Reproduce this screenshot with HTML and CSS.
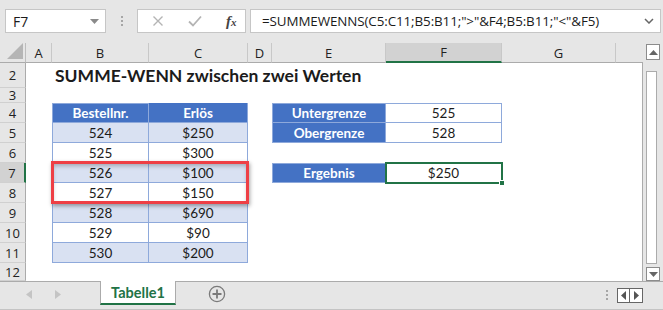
FILE: index.html
```html
<!DOCTYPE html>
<html lang="de">
<head>
<meta charset="utf-8">
<title>SUMME-WENN zwischen zwei Werten</title>
<link rel="stylesheet" href="styles.css">
</head>
<body>
<div class="app">
  <div class="fbar">
    <div class="namebox"><span>F7</span><svg class="dd" width="9" height="5" viewBox="0 0 9 5"><path d="M0 0H9L4.5 5Z" fill="#8a8a8a"/></svg></div>
    <div class="grip"><i></i><i></i><i></i></div>
    <div class="fnbox">
      <svg width="12" height="12" viewBox="0 0 12 12"><path d="M1.5 1.5L10.5 10.5M10.5 1.5L1.5 10.5" stroke="#b4b4b4" stroke-width="1.4"/></svg>
      <svg width="14" height="12" viewBox="0 0 14 12"><path d="M1 6.5L5 10.5L13 1.5" stroke="#b4b4b4" stroke-width="1.8" fill="none"/></svg>
      <span class="fx">f<sub>x</sub></span>
    </div>
    <div class="formula"><span>=SUMMEWENNS(C5:C11;B5:B11;"&gt;"&amp;F4;B5:B11;"&lt;"&amp;F5)</span><svg width="10" height="6" viewBox="0 0 10 6"><path d="M1 1L5 5L9 1" stroke="#666" stroke-width="1.5" fill="none"/></svg></div>
  </div>

  <div class="sheetwrap">
    <div class="sheet">
      <div class="corner"><svg width="16" height="16" viewBox="0 0 16 16"><path d="M16 0V16H0Z" fill="#b5b5b5"/></svg></div>
      <div class="ch">A</div><div class="ch">B</div><div class="ch">C</div><div class="ch">D</div><div class="ch">E</div><div class="ch sel">F</div><div class="ch">G</div><div class="ch last"></div>

      <div class="rh">2</div><div class="c"></div><div class="c title">SUMME-WENN zwischen zwei Werten</div><div class="c"></div><div class="c"></div><div class="c"></div><div class="c"></div><div class="c"></div><div class="c"></div>

      <div class="rh">3</div><div class="c"></div><div class="c"></div><div class="c"></div><div class="c"></div><div class="c"></div><div class="c"></div><div class="c"></div><div class="c"></div>

      <div class="rh">4</div><div class="c"></div><div class="c th tl">Bestellnr.</div><div class="c th">Erlös</div><div class="c"></div><div class="c th tl">Untergrenze</div><div class="c tv">525</div><div class="c"></div><div class="c"></div>

      <div class="rh">5</div><div class="c"></div><div class="c td fc odd">524</div><div class="c td odd">$250</div><div class="c"></div><div class="c th fc2">Obergrenze</div><div class="c tv2">528</div><div class="c"></div><div class="c"></div>

      <div class="rh">6</div><div class="c"></div><div class="c td fc">525</div><div class="c td">$300</div><div class="c"></div><div class="c"></div><div class="c"></div><div class="c"></div><div class="c"></div>

      <div class="rh sel">7</div><div class="c"></div><div class="c td fc odd">526</div><div class="c td odd">$100</div><div class="c"></div><div class="c th tl">Ergebnis</div><div class="c tv">$250</div><div class="c"></div><div class="c"></div>

      <div class="rh">8</div><div class="c"></div><div class="c td fc">527</div><div class="c td">$150</div><div class="c"></div><div class="c"></div><div class="c"></div><div class="c"></div><div class="c"></div>

      <div class="rh">9</div><div class="c"></div><div class="c td fc odd">528</div><div class="c td odd">$690</div><div class="c"></div><div class="c"></div><div class="c"></div><div class="c"></div><div class="c"></div>

      <div class="rh">10</div><div class="c"></div><div class="c td fc">529</div><div class="c td">$90</div><div class="c"></div><div class="c"></div><div class="c"></div><div class="c"></div><div class="c"></div>

      <div class="rh">11</div><div class="c"></div><div class="c td fc odd">530</div><div class="c td odd">$200</div><div class="c"></div><div class="c"></div><div class="c"></div><div class="c"></div><div class="c"></div>

      <div class="rh">12</div><div class="c"></div><div class="c"></div><div class="c"></div><div class="c"></div><div class="c"></div><div class="c"></div><div class="c"></div><div class="c"></div>

      <div class="redbox"></div>
      <div class="selbox"><i></i></div>
    </div>
    <div class="vscroll">
      <div class="sbtn"><svg width="9" height="5" viewBox="0 0 9 5"><path d="M0 5H9L4.5 0Z" fill="#666"/></svg></div>
      <div class="thumb"></div>
      <div class="sbtn"><svg width="9" height="5" viewBox="0 0 9 5"><path d="M0 0H9L4.5 5Z" fill="#666"/></svg></div>
    </div>
  </div>

  <div class="tabbar">
    <div class="navs">
      <svg width="6" height="9" viewBox="0 0 6 9"><path d="M6 0V9L0 4.5Z" fill="#c4c4c4"/></svg>
      <svg width="6" height="9" viewBox="0 0 6 9"><path d="M0 0V9L6 4.5Z" fill="#c4c4c4"/></svg>
    </div>
    <div class="tab">Tabelle1</div>
    <div class="add"><svg width="18" height="18" viewBox="0 0 18 18"><circle cx="9" cy="9" r="7.6" fill="none" stroke="#7a7a7a" stroke-width="1.3"/><path d="M9 4.5V13.5M4.5 9H13.5" stroke="#7a7a7a" stroke-width="1.8"/></svg></div>
    <div class="spacer"></div>
    <div class="grip2"><i></i><i></i><i></i></div>
    <div class="hnav">
      <div class="hb"><svg width="5" height="9" viewBox="0 0 5 9"><path d="M5 0V9L0 4.5Z" fill="#555"/></svg></div>
      <div class="hb"><svg width="5" height="9" viewBox="0 0 5 9"><path d="M0 0V9L5 4.5Z" fill="#555"/></svg></div>
    </div>
  </div>
</div>
</body>
</html>
```

FILE: styles.css
```css
* { box-sizing: border-box; }
html, body { margin: 0; padding: 0; }
body { background: #e6e6e6; font-family: "Open Sans", "Noto Sans", sans-serif; color: #1b1b1b; }
.app { width: 663px; height: 310px; overflow: hidden; background: #e6e6e6; }

.fbar { height: 43px; display: flex; align-items: flex-start; padding-top: 9px; padding-left: 5px; }
.namebox { width: 101px; height: 24px; background: #fff; border: 1px solid #c6c6c6; display: flex; align-items: center; justify-content: space-between; padding: 0 6px 0 7px; font-size: 14px; }
.grip { width: 31px; height: 24px; display: flex; flex-direction: column; align-items: center; justify-content: center; gap: 2px; }
.grip i, .grip2 i { display: block; width: 2px; height: 2px; background: #a6a6a6; }
.fnbox { width: 109px; height: 24px; background: #fff; border: 1px solid #c6c6c6; display: flex; align-items: center; padding: 0 0 0 14px; gap: 0; }
.fnbox svg:first-child { margin-right: 24px; }
.fnbox svg:nth-child(2) { margin-right: 24px; }
.fx { font-family: "Liberation Serif", serif; font-style: italic; font-size: 15px; color: #444; font-weight: bold; }
.fx sub { font-size: 11px; vertical-align: 0; }
.formula { margin-left: 4px; width: 411px; height: 24px; background: #fff; border: 1px solid #c6c6c6; display: flex; align-items: center; justify-content: space-between; padding: 0 6px 0 11px; font-size: 13.4px; letter-spacing: -0.1px; }

.sheetwrap { display: flex; height: 238px; }
.sheet { position: relative; width: 643px; display: grid;
  grid-template-columns: 26px 26px 97px 99px 24px 114px 116px 114px 27px;
  grid-template-rows: 20px 25px 15px repeat(8, 20px) 18px;
  background: #fff; border-right: 1px solid #ababab; }
.corner { background: #e6e6e6; border-right: 1px solid #bdbdbd; border-bottom: 1px solid #ababab; display: flex; align-items: flex-end; justify-content: flex-end; padding: 0 2px 3px 0; }
.ch { background: #e6e6e6; border-right: 1px solid #c8c8c8; border-bottom: 1px solid #ababab; display: flex; align-items: center; justify-content: center; font-size: 13px; color: #222; }
.ch.sel { background: #d2d2d2; border-bottom: 2px solid #217346; }
.ch.last { border-right: none; }
.rh { background: #e6e6e6; border-right: 1px solid #ababab; border-bottom: 1px solid #d0d0d0; display: flex; align-items: center; justify-content: center; font-size: 13px; color: #222; }
.rh.sel { background: #d2d2d2; border-right: 2px solid #217346; }
.c { font-family: "Lato", "Noto Sans", sans-serif; font-size: 13.5px; display: flex; align-items: center; justify-content: center; }
.title { justify-content: flex-start; white-space: nowrap; font-weight: bold; font-size: 17.5px; padding-left: 3px; overflow: visible; }
.th { background: #4472c4; color: #fff; font-weight: bold; border-right: 1px solid #8ea9db; border-bottom: 1px solid #8ea9db; border-left: 1px solid #8ea9db; }
.tl { border-top: 1px solid #8ea9db; }
.th:nth-child(n) + .th { border-left: none; }
.td { border-right: 1px solid #8ea9db; border-bottom: 1px solid #8ea9db; }
.td.fc { border-left: 1px solid #8ea9db; }
.odd { background: #d9e1f2; }
.tv { border-top: 1px solid #8ea9db; border-right: 1px solid #8ea9db; border-bottom: 1px solid #8ea9db; }
.tv2 { border-right: 1px solid #8ea9db; border-bottom: 1px solid #8ea9db; }

.redbox { position: absolute; left: 51px; top: 118px; width: 198px; height: 43px; border: 3px solid #ee3f45; box-shadow: 1px 2px 4px rgba(0,0,0,.35), inset 0 3px 4px -1px rgba(0,0,0,.25); pointer-events: none; }
.selbox { position: absolute; left: 385px; top: 119px; width: 118px; height: 22px; border: 2px solid #217346; }
.selbox i { position: absolute; right: -4px; bottom: -4px; width: 6px; height: 6px; background: #217346; border: 1px solid #fff; }

.vscroll { width: 20px; display: flex; flex-direction: column; padding: 1px 3px 0 3px; }
.sbtn { height: 16px; width: 14px; background: #fff; border: 1px solid #8c8c8c; display: flex; align-items: center; justify-content: center; }
.thumb { flex: 1; margin: 11px 0 3px 0; width: 11px; background: #fff; border: 1px solid #ababab; }
.vscroll .sbtn:last-child { height: 14px; }

.tabbar { height: 29px; border-top: 1px solid #ababab; border-bottom: 1px solid #c4c4c4; display: flex; align-items: flex-start; }
.navs { width: 100px; height: 24px; display: flex; align-items: center; padding-left: 26px; gap: 23px; }
.tab { width: 76px; height: 24px; margin-top: -1px; background: #fff; border: 1px solid #ababab; border-top: none; border-bottom: 2px solid #217346; color: #217346; font-weight: bold; font-family: "Lato", sans-serif; font-size: 14.5px; display: flex; align-items: center; justify-content: center; }
.add { width: 82px; height: 24px; display: flex; align-items: center; justify-content: center; padding-right: 1px; }
.spacer { flex: 1; }
.grip2 { width: 20px; height: 24px; display: flex; flex-direction: column; align-items: center; justify-content: center; gap: 2px; padding-top: 2px; }
.hnav { display: flex; margin: 6px 20px 0 0; }
.hb { width: 13px; height: 15px; background: #fff; border: 1px solid #666; display: flex; align-items: center; justify-content: center; }
.hb + .hb { border-left: none; width: 13px; }
```
